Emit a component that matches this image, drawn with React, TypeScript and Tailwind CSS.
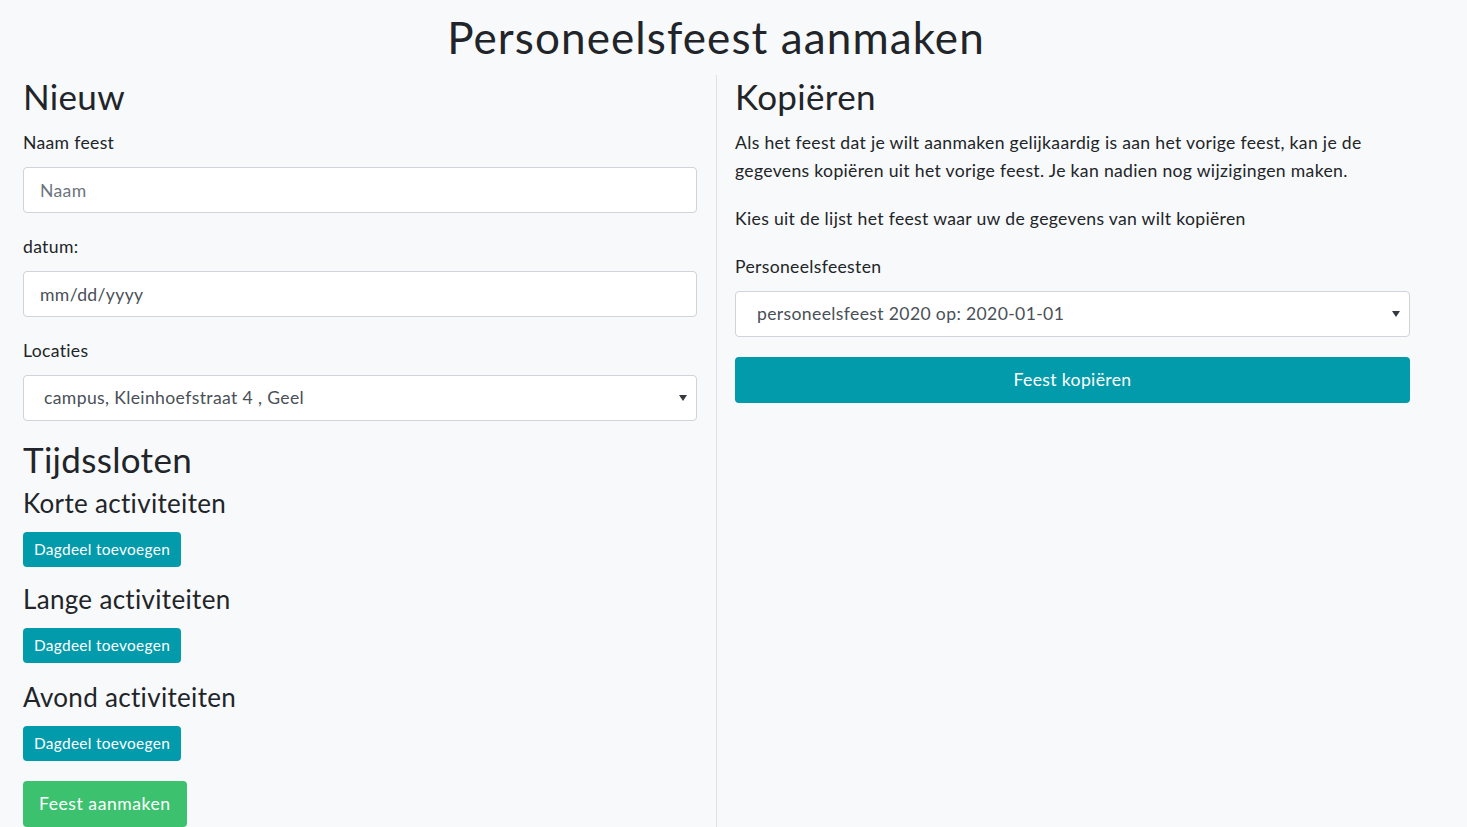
import React from 'react';

const font = { fontFamily: 'Lato, "Noto Sans", sans-serif' };

const Arrow = () => (
  <svg className="pointer-events-none absolute right-[10px] top-1/2 -translate-y-1/2" width="8" height="6" viewBox="0 0 8 6">
    <path d="M0 0 L8 0 L4 6 Z" fill="#343a40" />
  </svg>
);

const Field = ({ label, children, last }: { label: string; children: React.ReactNode; last?: boolean }) => (
  <div className={last ? 'mb-0' : 'mb-[21px]'}>
    <label className="block text-[17.6px] leading-[26px] mb-[11px] text-[#212529]">{label}</label>
    {children}
  </div>
);

const inputCls =
  'block w-full h-[46px] bg-white border border-[#ced4da] rounded-[4px] px-[16px] text-[17.6px] tracking-[0.02em] text-[#495057] outline-none';

const SmallBtn = () => (
  <button className="mt-[13px] h-[35px] px-[11px] rounded-[4px] bg-[#029bab] text-white text-[15.4px] tracking-[0.02em] leading-none">
    Dagdeel toevoegen
  </button>
);

const Section = ({ title, gap }: { title: string; gap: string }) => (
  <>
    <h4 className={gap + ' text-[26px] leading-[31px] text-[#212529]'}>{title}</h4>
    <SmallBtn />
  </>
);

export default function App() {
  return (
    <div style={font} className="min-h-screen bg-[#f8f9fa] text-[#212529] tracking-[0.02em] overflow-hidden">
      <div className="w-[1432px]">
        <h1 className="text-center text-[44px] leading-[52px] tracking-[0.025em] pt-[11px] h-[75px]">
          Personeelsfeest aanmaken
        </h1>
        <div className="flex">
          {/* Nieuw */}
          <div className="w-[716px] pl-[23px] pr-[19px] pb-[10px]">
            <h2 className="text-[35px] leading-[42px]">Nieuw</h2>
            <div className="mt-[13px]">
              <Field label="Naam feest">
                <input className={inputCls + ' placeholder:text-[#6c757d]'} placeholder="Naam" />
              </Field>
              <Field label="datum:">
                <input className={inputCls + ' placeholder:text-[#495057]'} placeholder="mm/dd/yyyy" />
              </Field>
              <Field label="Locaties" last>
                <div className="relative">
                  <select className={inputCls + ' appearance-none pl-[20px]'} defaultValue="geel">
                    <option value="geel">campus, Kleinhoefstraat 4 , Geel</option>
                  </select>
                  <Arrow />
                </div>
              </Field>
            </div>
            <h2 className="mt-[17px] text-[35px] leading-[42px]">Tijdssloten</h2>
            <h4 className="mt-[8px] text-[26px] leading-[31px]">Korte activiteiten</h4>
            <SmallBtn />
            <Section title="Lange activiteiten" gap="mt-[17px]" />
            <Section title="Avond activiteiten" gap="mt-[19px]" />
            <div>
              <button className="mt-[20px] h-[46px] px-[16px] rounded-[4px] bg-[#3cc26e] text-white text-[17.6px] tracking-[0.03em]">
                Feest aanmaken
              </button>
            </div>
          </div>

          {/* Kopiëren */}
          <div className="w-[716px] border-l border-[#dee2e6] pl-[18px] pr-[22px]">
            <h2 className="text-[35px] leading-[42px]">Kopiëren</h2>
            <p className="mt-[12px] text-[17.6px] leading-[28px]">
              Als het feest dat je wilt aanmaken gelijkaardig is aan het vorige feest, kan je de gegevens kopiëren uit
              het vorige feest. Je kan nadien nog wijzigingen maken.
            </p>
            <p className="mt-[20px] text-[17.6px] leading-[28px]">
              Kies uit de lijst het feest waar uw de gegevens van wilt kopiëren
            </p>
            <label className="block mt-[21px] mb-[11px] text-[17.6px] leading-[26px]">Personeelsfeesten</label>
            <div className="relative">
              <select className={inputCls + ' appearance-none pl-[21px]'} defaultValue="2020">
                <option value="2020">personeelsfeest 2020 op: 2020-01-01</option>
              </select>
              <Arrow />
            </div>
            <button className="mt-[20px] w-full h-[46px] rounded-[4px] bg-[#029bab] text-white text-[17.6px] tracking-[0.02em]">
              Feest kopiëren
            </button>
          </div>
        </div>
      </div>
    </div>
  );
}
